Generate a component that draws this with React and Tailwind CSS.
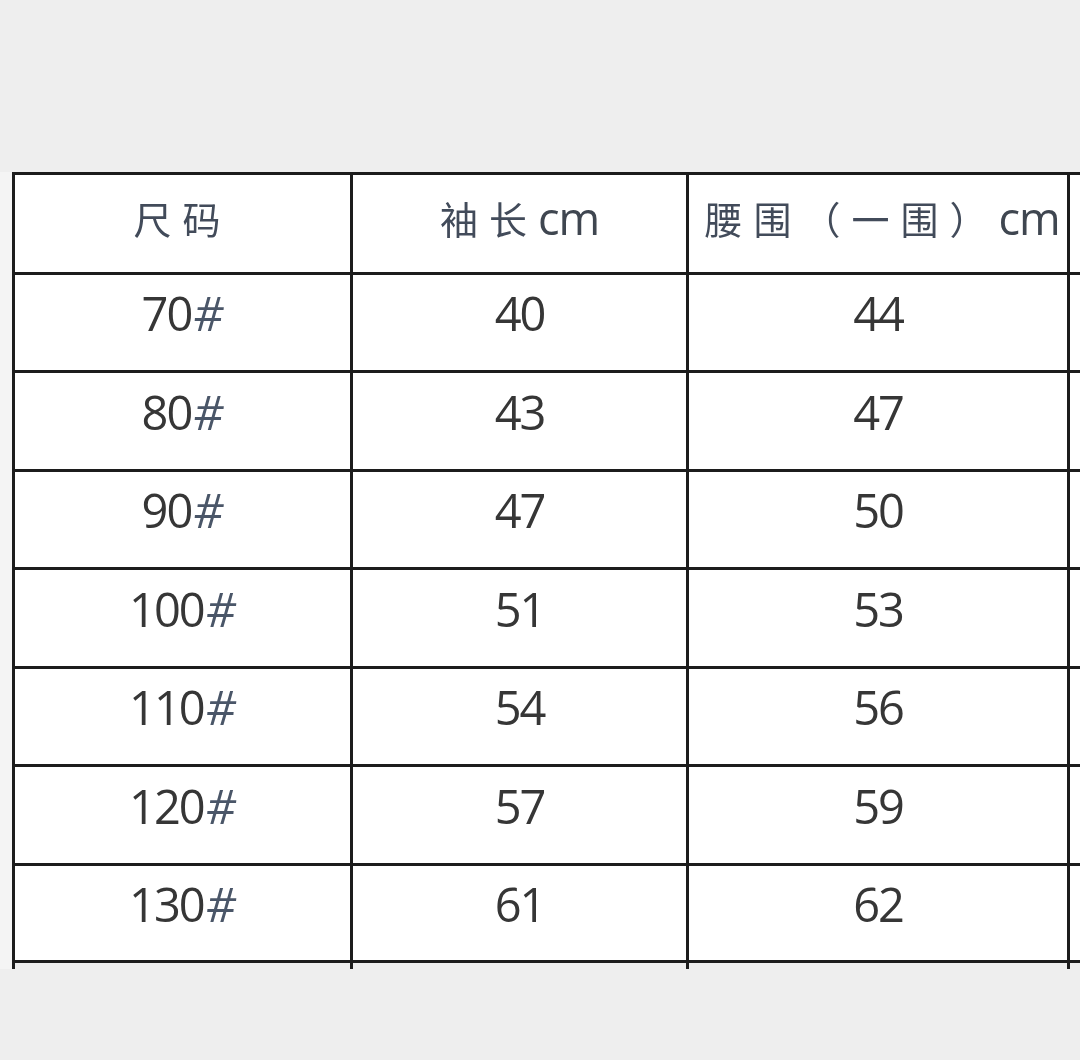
import React from 'react';

const rows = [
  { size: '70#', sleeve: '40', waist: '44', h: 'h-[98px]' },
  { size: '80#', sleeve: '43', waist: '47', h: 'h-[99px]' },
  { size: '90#', sleeve: '47', waist: '50', h: 'h-[98px]' },
  { size: '100#', sleeve: '51', waist: '53', h: 'h-[99px]' },
  { size: '110#', sleeve: '54', waist: '56', h: 'h-[98px]' },
  { size: '120#', sleeve: '57', waist: '59', h: 'h-[99px]' },
  { size: '130#', sleeve: '61', waist: '62', h: 'h-[97px]' },
];

const cell = 'flex items-center justify-center bg-white border-r-[3px] border-b-[3px] border-[#1c1c1c]';
const cjk = "font-['Noto_Sans_CJK_SC',sans-serif] text-[38px] tracking-[11px] text-[#424b5a] font-normal blur-[0.4px]";
const latin = "font-['Open_Sans',sans-serif] text-[45px] text-[#3f4650] tracking-[-1px] blur-[0.4px]";
const num = "font-['Open_Sans',sans-serif] text-[47px] leading-none tracking-[-2px] text-[#363636] pb-[18px] blur-[0.4px]";

const App = () => {
  return (
    <div className="w-[1080px] h-[1060px] overflow-hidden bg-[#eeeeee]">
      <div className="mt-[172px] pl-[12px] bg-[#f4f4f4]">
        <div className="grid grid-cols-[338px_336px_381px_100px] border-l-[3px] border-t-[3px] border-[#1c1c1c]">
          {/* header */}
          <div className={`${cell} h-[100px] pb-[12px] leading-none`}>
            <span className={cjk}>尺码</span>
          </div>
          <div className={`${cell} h-[100px] pb-[12px] leading-none`}>
            <span className={cjk}>袖长</span>
            <span className={latin}>cm</span>
          </div>
          <div className={`${cell} h-[100px] pb-[12px] pl-[8px] leading-none`}>
            <span className={cjk}>腰围（一围）</span>
            <span className={latin}>cm</span>
          </div>
          <div className={`${cell} h-[100px]`} />

          {rows.map((r) => (
            <React.Fragment key={r.size}>
              <div className={`${cell} ${r.h}`}>
                <span className={num}>
                  {r.size.slice(0, -1)}
                  <span className="text-[#4a5668] tracking-normal pl-[2px] italic">#</span>
                </span>
              </div>
              <div className={`${cell} ${r.h}`}>
                <span className={num}>{r.sleeve}</span>
              </div>
              <div className={`${cell} ${r.h}`}>
                <span className={num}>{r.waist}</span>
              </div>
              <div className={`${cell} ${r.h}`} />
            </React.Fragment>
          ))}

          {/* line ends under the bottom border */}
          <div className="h-[6px] border-r-[3px] border-[#1c1c1c] bg-[#eeeeee]" />
          <div className="h-[6px] border-r-[3px] border-[#1c1c1c] bg-[#eeeeee]" />
          <div className="h-[6px] border-r-[3px] border-[#1c1c1c] bg-[#eeeeee]" />
          <div className="h-[6px] bg-[#eeeeee]" />
        </div>
      </div>
    </div>
  );
};

export default App;
